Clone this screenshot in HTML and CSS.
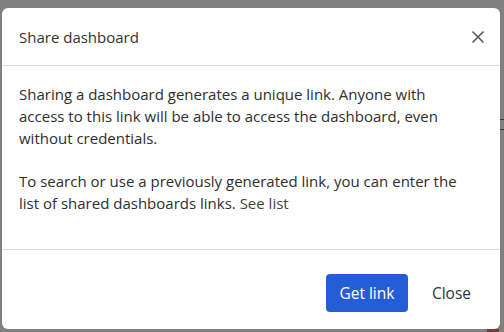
FILE: index.html
```html
<!DOCTYPE html>
<html>
<head>
<meta charset="utf-8">
<link rel="stylesheet" href="styles.css">
</head>
<body>
<div class="backdrop">
  <span class="bg-line bg-line-1"></span>
  <span class="bg-line bg-line-2"></span>
  <span class="bg-chip"></span>
  <div class="modal">
    <div class="modal-header">
      <h2 class="modal-title">Share dashboard</h2>
      <button class="icon-close" aria-label="Close">
        <svg width="12" height="12" viewBox="0 0 12 12"><path d="M1 1 L11 11 M11 1 L1 11" stroke="#555" stroke-width="1.6" stroke-linecap="round"/></svg>
      </button>
    </div>
    <div class="modal-body">
      <p>Sharing a dashboard generates a unique link. Anyone with<br>access to this link will be able to access the dashboard, even<br>without credentials.</p>
      <p>To search or use a previously generated link, you can enter the<br>list of shared dashboards links. <a class="see-list" href="#">See list</a></p>
    </div>
    <div class="modal-footer">
      <button class="btn btn-primary">Get link</button>
      <button class="btn btn-link">Close</button>
    </div>
  </div>
</div>
</body>
</html>
```

FILE: styles.css
```css
* { box-sizing: border-box; }
html, body { margin: 0; padding: 0; }
body {
  background: #808080;
  font-family: "Open Sans", "Lato", sans-serif;
  color: #333;
  width: 504px;
  height: 332px;
  overflow: hidden;
}
.backdrop {
  position: relative;
  width: 504px;
  height: 332px;
  padding: 8px 4px 0 2px;
}
.bg-line {
  position: absolute;
  right: 0;
  width: 6px;
  height: 1px;
  background: #3c3c3c;
}
.bg-line-1 { top: 119px; }
.bg-line-2 { top: 129px; }
.bg-chip {
  position: absolute;
  left: 487px;
  top: 329px;
  width: 12px;
  height: 3px;
  background: #7a3a3a;
}
.modal {
  position: relative;
  width: 498px;
  height: 321px;
  background: #fff;
  border-radius: 6px;
  display: flex;
  flex-direction: column;
}
.modal-header {
  height: 58px;
  border-bottom: 1px solid #dedede;
  display: flex;
  align-items: center;
  justify-content: space-between;
  padding: 0 15px 0 17px;
}
.modal-title {
  margin: 0;
  font-size: 15px;
  font-weight: 400;
  color: #333;
}
.icon-close {
  border: 0;
  background: none;
  padding: 0;
  width: 14px;
  height: 14px;
  display: flex;
  align-items: center;
  justify-content: center;
}
.modal-body {
  flex: 1;
  padding: 17px 17px 0 17px;
  border-bottom: 1px solid #dedede;
  font-size: 15px;
  line-height: 22px;
  white-space: nowrap;
  color: #2e2e2e;
}
.modal-body p { margin: 0 0 21px 0; }
.see-list { color: #444; text-decoration: none; }
.modal-footer {
  height: 79px;
  display: flex;
  justify-content: flex-end;
  align-items: flex-start;
  padding: 24px 17px 0 0;
  gap: 12px;
}
.btn {
  font-family: inherit;
  font-size: 15.5px;
  height: 38px;
  border-radius: 4px;
  border: 0;
  padding: 0 12px;
}
.btn-primary {
  width: 82px;
  background: #245ed6;
  color: #fff;
}
.btn-link {
  background: none;
  color: #333;
}
```
